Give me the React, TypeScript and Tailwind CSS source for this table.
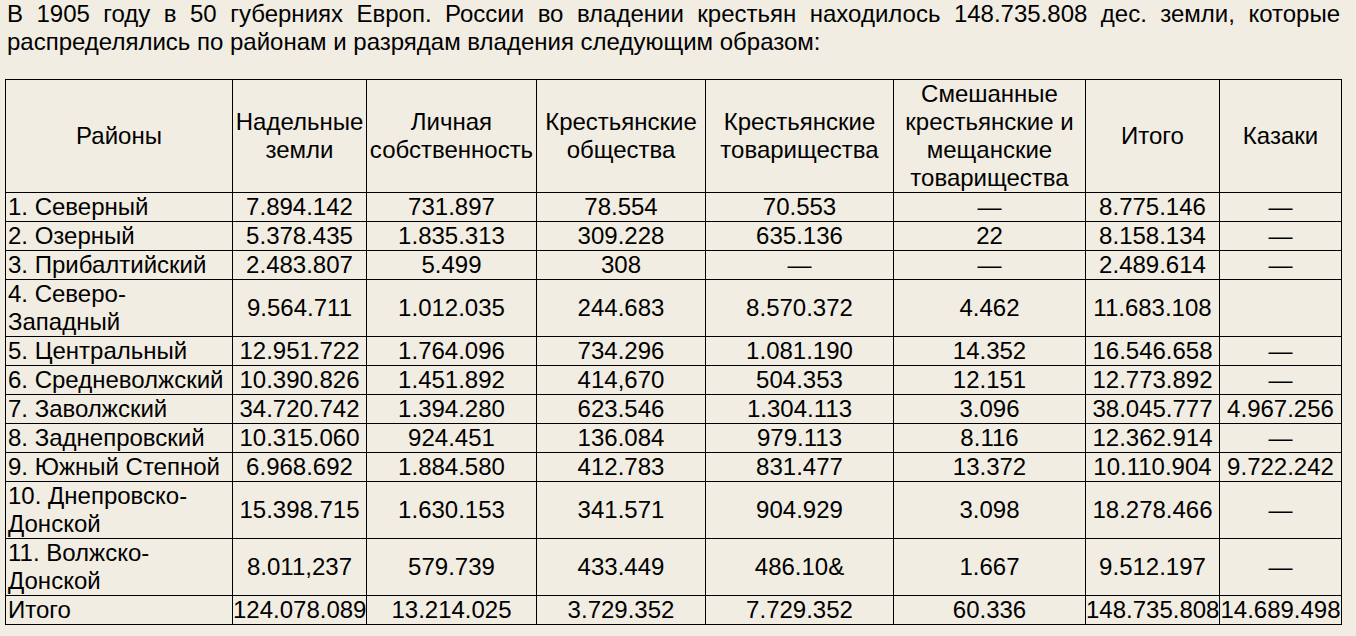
import React from "react";

const rows: string[][] = [
  ["1. Северный", "7.894.142", "731.897", "78.554", "70.553", "—", "8.775.146", "—"],
  ["2. Озерный", "5.378.435", "1.835.313", "309.228", "635.136", "22", "8.158.134", "—"],
  ["3. Прибалтийский", "2.483.807", "5.499", "308", "—", "—", "2.489.614", "—"],
  ["4. Северо-Западный", "9.564.711", "1.012.035", "244.683", "8.570.372", "4.462", "11.683.108", ""],
  ["5. Центральный", "12.951.722", "1.764.096", "734.296", "1.081.190", "14.352", "16.546.658", "—"],
  ["6. Средневолжский", "10.390.826", "1.451.892", "414,670", "504.353", "12.151", "12.773.892", "—"],
  ["7. Заволжский", "34.720.742", "1.394.280", "623.546", "1.304.113", "3.096", "38.045.777", "4.967.256"],
  ["8. Заднепровский", "10.315.060", "924.451", "136.084", "979.113", "8.116", "12.362.914", "—"],
  ["9. Южный Степной", "6.968.692", "1.884.580", "412.783", "831.477", "13.372", "10.110.904", "9.722.242"],
  ["10. Днепровско-Донской", "15.398.715", "1.630.153", "341.571", "904.929", "3.098", "18.278.466", "—"],
  ["11. Волжско-Донской", "8.011,237", "579.739", "433.449", "486.10&", "1.667", "9.512.197", "—"],
  ["Итого", "124.078.089", "13.214.025", "3.729.352", "7.729.352", "60.336", "148.735.808", "14.689.498"],
];

const headers = [
  "Районы",
  "Надельные земли",
  "Личная собственность",
  "Крестьянские общества",
  "Крестьянские товарищества",
  "Смешанные крестьянские и мещанские товарищества",
  "Итого",
  "Казаки",
];

const widths = [227, 134, 170, 169, 188, 192, 134, 122];

export default function App() {
  return (
    <div
      className="min-h-screen bg-[#f1ede2] text-black text-[24px] leading-[28px]"
      style={{ fontFamily: '"Liberation Sans", Arial, sans-serif' }}
    >
      <div className="ml-[5px] w-[1337px]">
        <p className="px-[2px] text-justify">
          В 1905 году в 50 губерниях Европ. России во владении крестьян находилось 148.735.808 дес. земли, которые распределялись по районам и разрядам владения следующим образом:
        </p>
        <table className="mt-[23px] table-fixed border-collapse border border-black w-[1337px]">
          <colgroup>
            {widths.map((w, i) => (
              <col key={i} style={{ width: w }} />
            ))}
          </colgroup>
          <thead>
            <tr>
              {headers.map((h, i) => (
                <th
                  key={i}
                  className="border border-black px-[2px] py-0 font-normal text-center align-middle"
                >
                  {h}
                </th>
              ))}
            </tr>
          </thead>
          <tbody>
            {rows.map((r, ri) => (
              <tr key={ri}>
                {r.map((c, ci) => (
                  <td
                    key={ci}
                    className={
                      ci === 0
                        ? "border border-black px-[2px] py-0 text-left align-middle"
                        : "border border-black px-0 py-0 text-center align-middle whitespace-nowrap"
                    }
                  >
                    {c}
                  </td>
                ))}
              </tr>
            ))}
          </tbody>
        </table>
      </div>
    </div>
  );
}
